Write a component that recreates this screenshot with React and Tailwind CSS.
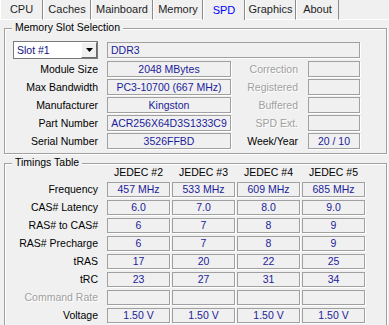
import React from 'react';

const tabs = [
  { name: 'CPU', w: 'w-[43px]' },
  { name: 'Caches', w: 'w-[48px]' },
  { name: 'Mainboard', w: 'w-[62px]' },
  { name: 'Memory', w: 'w-[50px]' },
  { name: 'SPD', w: 'w-[42px]', active: true },
  { name: 'Graphics', w: 'w-[51px]' },
  { name: 'About', w: 'w-[43px]' },
];

const slotRows = [
  ['Module Size', '2048 MBytes', 'Correction', '', true],
  ['Max Bandwidth', 'PC3-10700 (667 MHz)', 'Registered', '', true],
  ['Manufacturer', 'Kingston', 'Buffered', '', true],
  ['Part Number', 'ACR256X64D3S1333C9', 'SPD Ext.', '', true],
  ['Serial Number', '3526FFBD', 'Week/Year', '20 / 10', false],
];

const timings = [
  ['Frequency', ['457 MHz', '533 MHz', '609 MHz', '685 MHz']],
  ['CAS# Latency', ['6.0', '7.0', '8.0', '9.0']],
  ['RAS# to CAS#', ['6', '7', '8', '9']],
  ['RAS# Precharge', ['6', '7', '8', '9']],
  ['tRAS', ['17', '20', '22', '25']],
  ['tRC', ['23', '27', '31', '34']],
  ['Command Rate', ['', '', '', ''], true],
  ['Voltage', ['1.50 V', '1.50 V', '1.50 V', '1.50 V']],
];

function Field({ children, className = '' }) {
  return (
    <div className={`flex items-center border border-[#a0a0a0] shadow-[1px_1px_0_#fff] text-[#1c1c9a] leading-none whitespace-nowrap ${className}`}>
      {children}
    </div>
  );
}

function Label({ children, disabled, className = '' }) {
  return (
    <div
      className={`text-right leading-none whitespace-nowrap ${
        disabled ? 'text-[#a0a0a0] [text-shadow:1px_1px_0_#fff]' : 'text-black'
      } ${className}`}
    >
      {children}
    </div>
  );
}

function Group({ title, className = '', children }) {
  return (
    <div className={`relative ml-[4px] w-[383px] border border-[#a0a0a0] shadow-[inset_1px_1px_0_#fff,1px_1px_0_#fff] ${className}`}>
      <span className="absolute -top-[8px] left-[7px] px-[3px] bg-[#f0f0f0] text-[10.5px] leading-[12px] text-black">
        {title}
      </span>
      {children}
    </div>
  );
}

export default function App() {
  return (
    <div className="w-[389px] h-[325px] overflow-hidden bg-[#f0f0f0] font-['Liberation_Sans',Arial,sans-serif] text-[10.5px]">
      {/* Tabs */}
      <div className="flex h-[20px] text-[11px]">
        {tabs.map((t) => (
          <div
            key={t.name}
            className={`${t.w} flex items-center justify-center border-l border-l-white border-r border-r-[#8a8a8a] ${
              t.active ? 'text-[#0000ff] border-l-[#f0f0f0]' : 'text-[#1e1e1e] border-b border-b-white'
            }`}
          >
            {t.name}
          </div>
        ))}
        <div className="flex-1 border-b border-b-white" />
      </div>

      {/* Memory Slot Selection */}
      <Group title="Memory Slot Selection" className="mt-[8px] h-[126px] pl-[8px] pt-[12px]">
        <div className="flex items-center h-[18px]">
          <div className="flex w-[85px] h-[18px] border border-[#7a7a7a] bg-white">
            <div className="flex-1 flex items-center pl-[3px] text-[#101080] leading-none">Slot #1</div>
            <div className="w-[16px] flex items-center justify-center bg-[#f0f0f0] border-t border-l border-white border-b border-r border-b-[#6a6a6a] border-r-[#6a6a6a]">
              <svg width="7" height="4" viewBox="0 0 7 4">
                <path d="M0 0h7L3.5 4z" fill="#000" />
              </svg>
            </div>
          </div>
          <Field className="ml-[9px] w-[253px] h-[16px] pl-[3px]">DDR3</Field>
        </div>
        <div className="mt-[2px] flex flex-col gap-[2px]">
          {slotRows.map(([label, value, label2, value2, dis]) => (
            <div key={label} className="flex items-center h-[16px]">
              <Label className="w-[85px]">{label}</Label>
              <Field className="ml-[9px] w-[124px] h-[16px] justify-center">{value}</Field>
              <Label className="w-[67px]" disabled={dis}>{label2}</Label>
              <Field className="ml-[10px] w-[52px] h-[16px] justify-center">{value2}</Field>
            </div>
          ))}
        </div>
      </Group>

      {/* Timings Table */}
      <Group title="Timings Table" className="mt-[9px] h-[170px] pl-[8px] pt-[1px]">
        <div className="flex items-center h-[14px]">
          <div className="w-[85px]" />
          <div className="ml-[9px] flex gap-[2px]">
            {['JEDEC #2', 'JEDEC #3', 'JEDEC #4', 'JEDEC #5'].map((h) => (
              <div key={h} className="w-[63px] text-center leading-none text-black">{h}</div>
            ))}
          </div>
        </div>
        <div className="mt-[3px] flex flex-col gap-[3px]">
          {timings.map(([label, vals, dis]) => (
            <div key={label} className="flex items-center h-[15px]">
              <Label className="w-[85px]" disabled={dis}>{label}</Label>
              <div className="ml-[9px] flex gap-[2px]">
                {vals.map((v, i) => (
                  <Field key={i} className="w-[63px] h-[15px] justify-center">{v}</Field>
                ))}
              </div>
            </div>
          ))}
        </div>
      </Group>
    </div>
  );
}
